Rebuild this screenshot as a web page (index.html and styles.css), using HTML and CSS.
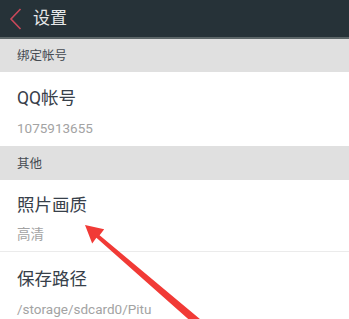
FILE: index.html
```html
<!DOCTYPE html>
<html lang="zh-CN">
<head>
<meta charset="utf-8">
<title>设置</title>
<link rel="stylesheet" href="styles.css">
</head>
<body>
<div class="screen">
  <header class="topbar">
    <svg class="back" width="14" height="22" viewBox="0 0 14 22"><polyline points="11.5,1 2,11 11.5,21" fill="none" stroke="#c9485a" stroke-width="1.6"/></svg>
    <span class="title">设置</span>
  </header>
  <div class="section">绑定帐号</div>
  <div class="item">
    <div class="item-title">QQ帐号</div>
    <div class="item-sub">1075913655</div>
  </div>
  <div class="section section-b">其他</div>
  <div class="item item-b">
    <div class="item-title">照片画质</div>
    <div class="item-sub">高清</div>
  </div>
  <div class="item item-c">
    <div class="item-title">保存路径</div>
    <div class="item-sub">/storage/sdcard0/Pitu</div>
  </div>
  <svg class="arrow" width="349" height="319" viewBox="0 0 349 319">
    <polygon points="85,225 104.2,229.2 99.6,235.2 209,326.6 204,333 96.4,237.8 92.2,243.6" fill="#f13a36"/>
  </svg>
</div>
</body>
</html>
```
FILE: styles.css
```css
html, body {
  margin: 0;
  padding: 0;
  background: #ffffff;
}
body {
  font-family: Roboto, "Noto Sans CJK SC", sans-serif;
  width: 349px;
  height: 319px;
  overflow: hidden;
}
.screen {
  position: relative;
  width: 349px;
  height: 319px;
  overflow: hidden;
}
.topbar {
  height: 37px;
  background: #263238;
  border-bottom: 2px solid #5c6668;
  display: flex;
  align-items: center;
  padding-left: 9px;
  box-sizing: content-box;
}
.back {
  display: block;
  margin-right: 10px;
}
.title {
  color: #e6e8e9;
  font-size: 17px;
  line-height: 37px;
}
.section {
  background: #e0e0e0;
  height: 33px;
  line-height: 34px;
  padding-left: 17px;
  font-size: 12.5px;
  color: #454b52;
}
.section-b {
  height: 34px;
  line-height: 36px;
}
.item {
  height: 74px;
  padding-left: 17px;
  box-sizing: border-box;
  padding-top: 14px;
}
.item-b {
  height: 72px;
  padding-top: 13px;
  border-bottom: 1px solid #ebebeb;
}
.item-c {
  padding-top: 15px;
}
.item-title {
  font-size: 17.5px;
  line-height: 24px;
  color: #37404a;
}
.item-sub {
  font-size: 13.5px;
  line-height: 20px;
  margin-top: 8px;
  color: #a3a3a3;
}
.item-b .item-sub {
  margin-top: 7px;
}
.arrow {
  position: absolute;
  left: 0;
  top: 0;
}
```
